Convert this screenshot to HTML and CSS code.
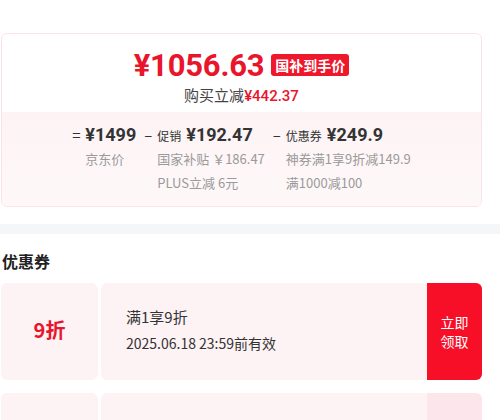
FILE: index.html
```html
<!DOCTYPE html>
<html>
<head>
	<meta charset="utf-8">
	<link rel="stylesheet" href="styles.css">
</head>
<body>

	<div class="page">
		<!-- price breakdown card -->
		<div class="price-card">
			<div class="price-top">
				<div class="final">
					<span class="amount">¥1056.63</span>
					<span class="badge">国补到手价</span>
				</div>
				<div class="saving">购买立减<span class="red">¥442.37</span></div>
			</div>

			<div class="price-calc">
				<div class="col">
					<div class="head"><span class="op">=</span><span class="num">¥1499</span></div>
					<div class="sub">京东价</div>
				</div>
				<div class="col">
					<div class="head"><span class="op">–</span><span class="label">促销</span><span class="num">¥192.47</span></div>
					<div class="sub">国家补贴 ￥186.47</div>
					<div class="sub">PLUS立减 6元</div>
				</div>
				<div class="col">
					<div class="head"><span class="op">–</span><span class="label">优惠券</span><span class="num">¥249.9</span></div>
					<div class="sub">神券满1享9折减149.9</div>
					<div class="sub">满1000减100</div>
				</div>
			</div>
		</div>
	</div>

	<div class="band"></div>

	<div class="page">
		<h2 class="title">优惠券</h2>

		<div class="coupon">
			<div class="coupon-left">9折</div>
			<div class="coupon-body">
				<div class="coupon-info">
					<div class="coupon-name">满1享9折</div>
					<div class="coupon-date">2025.06.18 23:59前有效</div>
				</div>
				<div class="coupon-btn">立即<br>领取</div>
			</div>
		</div>

		<div class="coupon">
			<div class="coupon-left"><span class="small">¥</span>100</div>
			<div class="coupon-body">
				<div class="coupon-info">
					<div class="coupon-name">满1000减100</div>
					<div class="coupon-date">2025.06.18 23:59前有效</div>
				</div>
				<div class="coupon-btn done">已领取</div>
			</div>
		</div>
	</div>

</body>
</html>
```

FILE: styles.css
```css
*, html, body{
	margin: 0;
	padding: 0;
	box-sizing: border-box;
}
body{
	background: #fff;
	font-family: "Noto Sans CJK SC", "Noto Sans", sans-serif;
	color: #333;
	width: 500px;
	height: 420px;
	overflow: hidden;
	padding-top: 33px;
}
.page{
	padding: 0 18px 0 1px;
}

/* price card */
.price-card{
	border: 1px solid #fbe3e6;
	border-radius: 6px;
	overflow: hidden;
}
.price-top{
	padding: 12px 0 5px;
	text-align: center;
}
.final{
	display: flex;
	justify-content: center;
	align-items: center;
	gap: 7px;
	height: 38px;
}
.final .amount{
	font-family: Roboto, "Liberation Sans", sans-serif;
	font-weight: 700;
	font-size: 31px;
	color: #e8152c;
	letter-spacing: -0.2px;
}
.final .badge{
	background: #ee172c;
	color: #fff;
	font-size: 14px;
	font-weight: 700;
	line-height: 22px;
	padding: 0 4px;
	border-radius: 3px;
}
.saving{
	font-size: 15px;
	line-height: 22px;
	color: #444;
}
.saving .red{
	font-family: Roboto, "Liberation Sans", sans-serif;
	font-weight: 500;
	color: #e8152c;
}

.price-calc{
	background: linear-gradient(#fdf3f5, #fef8f9);
	display: flex;
	justify-content: center;
	gap: 8px;
	padding: 11px 0 11px 0;
}
.col .head{
	display: flex;
	align-items: baseline;
	height: 24px;
	line-height: 24px;
}
.col .op{
	width: 13px;
	font-size: 15px;
	color: #333;
}
.col .label{
	font-size: 12px;
	color: #333;
	margin-right: 5px;
}
.col .num{
	font-family: Roboto, "Liberation Sans", sans-serif;
	font-weight: 700;
	font-size: 18px;
	color: #333;
}
.col .sub{
	padding-left: 13px;
	font-size: 13px;
	line-height: 24px;
	color: #9a9a9a;
	white-space: nowrap;
}

.band{
	height: 10px;
	background: #f5f6f8;
	margin-top: 17px;
}

/* coupons */
.title{
	font-size: 16px;
	font-weight: 700;
	line-height: 24px;
	margin: 15px 0 10px 1px;
	color: #222;
}
.coupon{
	display: flex;
	height: 97px;
	margin-bottom: 13px;
	gap: 3px;
	position: relative;
}
/* notches between stub and body */
.coupon::before,
.coupon::after{
	content: "";
	position: absolute;
	left: 94px;
	width: 8px;
	height: 8px;
	border-radius: 50%;
	background: #fff;
}
.coupon::before{ top: -4px; }
.coupon::after{ bottom: -4px; }

.coupon-left{
	width: 97px;
	background: #fdf2f4;
	border-radius: 6px;
	display: flex;
	align-items: center;
	justify-content: center;
	padding-bottom: 4px;
	font-size: 20px;
	font-weight: 700;
	color: #e8152c;
}
.coupon-left .small{
	font-size: 14px;
}
.coupon-body{
	flex: 1;
	display: flex;
	background: #fdf2f4;
	border-radius: 6px;
	overflow: hidden;
}
.coupon-info{
	flex: 1;
	padding: 23px 0 0 25px;
}
.coupon-name{
	font-size: 15px;
	line-height: 22px;
	color: #333;
}
.coupon-date{
	font-size: 14px;
	line-height: 22px;
	margin-top: 4px;
	color: #333;
}
.coupon-btn{
	width: 55px;
	background: #f70f28;
	color: #fff;
	font-size: 14px;
	line-height: 19px;
	display: flex;
	align-items: center;
	justify-content: center;
	text-align: center;
}
.coupon-btn.done{
	background: #fce6eb;
	color: #f38a98;
}
```
